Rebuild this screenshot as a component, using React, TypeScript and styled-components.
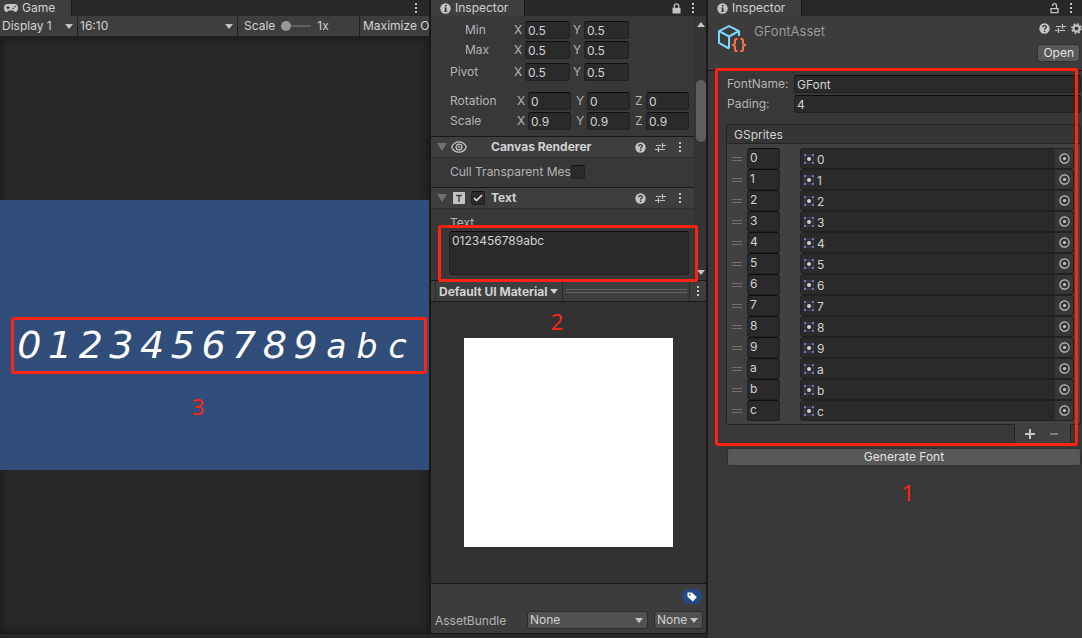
import React, { useId, useState } from "react";
import styled, { createGlobalStyle } from "styled-components";

const color = {
  line: "#191919",
  bar: "#282828",
  panel: "#383838",
  head: "#3e3e3e",
  field: "#2a2a2a",
  fieldEdge: "#212121",
  fieldTop: "#0d0d0d",
  label: "#b4b4b4",
  text: "#d2d2d2",
  icon: "#c4c4c4",
  mark: "#ff2314",
};

const GlobalStyle = createGlobalStyle`
  * { box-sizing: border-box; }
  body { margin: 0; background: ${color.bar}; }
  body, button, input, select, textarea {
    font-family: Inter, "Liberation Sans", sans-serif;
    font-size: 12px;
    line-height: 16px;
    color: ${color.text};
  }
  button { cursor: pointer; }
`;

/* ---------- layout ---------- */

const Editor = styled.div`
  display: grid;
  grid-template-columns: minmax(0, 708fr) minmax(0, 374fr);
  min-height: 100vh;
`;

const Workspace = styled.div`
  display: grid;
  grid-template-columns: minmax(0, 431fr) minmax(0, 277fr);
  border-bottom: 4px solid ${color.bar};
  background: ${color.line};
`;

const Panel = styled.section<{ $gap?: boolean }>`
  display: flex;
  flex-direction: column;
  min-width: 0;
  background: ${color.panel};
  border-right: ${(p) => (p.$gap ? 2 : 0)}px solid ${color.line};
  border-bottom: ${(p) => (p.$gap ? 1 : 0)}px solid ${color.line};
`;

const TabBar = styled.header`
  display: flex;
  justify-content: space-between;
  height: 16px;
  flex: none;
  background: ${color.bar};
`;

const Tab = styled.h2<{ $width: number }>`
  display: flex;
  align-items: center;
  gap: 4px;
  width: ${(p) => p.$width}px;
  height: 16px;
  margin: 0;
  padding-left: ${(p) => (p.$width < 80 ? 4 : 9)}px;
  background: ${color.head};
  border-right: 1px solid ${color.line};
  font-size: 12px;
  font-weight: 400;
`;

const IconRow = styled.div<{ $gap: number; $pad?: number }>`
  display: flex;
  align-items: center;
  gap: ${(p) => p.$gap}px;
  padding-right: ${(p) => p.$pad ?? 0}px;
`;

const IconButton = styled.button`
  display: grid;
  place-items: center;
  padding: 0;
  border: 0;
  background: none;
  color: ${color.icon};
`;

/* ---------- game view ---------- */

const Toolbar = styled.div`
  display: grid;
  grid-template-columns: 78px minmax(0, 160fr) 122px 69px;
  height: 21px;
  flex: none;
  overflow: hidden;
  background: ${color.head};
  border-bottom: 1px solid ${color.fieldEdge};
`;

const SelectBox = styled.div<{ $raised?: boolean }>`
  display: grid;
  align-items: center;
  min-width: 0;
  & > * { grid-area: 1 / 1; }
  & > svg { justify-self: end; margin-right: 4px; pointer-events: none; color: ${color.icon}; }
  ${(p) =>
    p.$raised
      ? "height: 18px; background: #515151; border: 1px solid #2c2c2c; border-radius: 3px;"
      : `border-right: 1px solid ${color.fieldEdge};`}
`;

const Select = styled.select`
  appearance: none;
  width: 100%;
  height: 16px;
  padding: 0 0 0 2px;
  border: 0;
  background: none;
`;

const ScaleGroup = styled.label`
  display: flex;
  align-items: center;
  gap: 6px;
  padding-left: 6px;
  border-right: 1px solid ${color.fieldEdge};
`;

const Slider = styled.input`
  appearance: none;
  width: 30px;
  height: 12px;
  margin: 0;
  background: linear-gradient(#5e5e5e, #5e5e5e) center / 100% 2px no-repeat;
  &::-webkit-slider-thumb {
    appearance: none;
    width: 10px;
    height: 10px;
    border-radius: 50%;
    background: #999;
  }
`;

const MaximizeButton = styled.button`
  padding: 0 0 0 3px;
  border: 0;
  background: none;
  text-align: left;
  white-space: nowrap;
  overflow: hidden;
`;

const Viewport = styled.div`
  display: flex;
  flex: 1;
  align-items: center;
  background: ${color.bar};
  box-shadow: inset 0 0 8px #151515;
`;

const Stage = styled.div`
  display: flex;
  flex-direction: column;
  align-items: center;
  width: 100%;
  aspect-ratio: 143 / 90;
  padding: 117px 2px 0 11px;
  background: #314d79;
`;

const Output = styled.div`
  display: grid;
  grid-template-columns: repeat(13, minmax(0, 1fr));
  align-items: baseline;
  width: 100%;
  height: 57px;
  padding-right: 11px;
  border: 3px solid ${color.mark};
  border-radius: 3px;
  color: #fff;
  text-align: center;
`;

const Glyph = styled.span<{ $letter: boolean }>`
  font: italic ${(p) => (p.$letter ? 33 : 38)}px/50px "DejaVu Sans", sans-serif;
`;

const Mark = styled.p`
  margin: 0;
  color: ${color.mark};
  font: 22px/28px "Noto Sans", sans-serif;
  text-align: center;
`;

const StageMark = styled(Mark)`
  margin: 18px 42px 0 0;
`;

/* ---------- inspector of the Text object ---------- */

const ScrollArea = styled.div`
  display: grid;
  grid-template-columns: minmax(0, 1fr) 12px;
  height: 264px;
  flex: none;
  position: relative;
`;

const Clip = styled.div`
  overflow: hidden;
  min-width: 0;
`;

const Transform = styled.div`
  margin-top: -16px;
  padding-bottom: 5px;
`;

const VectorRow = styled.div<{ $indent?: boolean; $before?: number }>`
  display: grid;
  grid-template-columns: 64px minmax(0, 1fr);
  align-items: center;
  height: 20px;
  margin-top: ${(p) => p.$before ?? 0}px;
  padding-left: 19px;
  color: ${color.label};
  & > span { padding-left: ${(p) => (p.$indent ? 15 : 0)}px; }
`;

const VectorFields = styled.div<{ $narrow: boolean }>`
  display: flex;
  gap: ${(p) => (p.$narrow ? 5 : 3)}px;
  margin-left: ${(p) => (p.$narrow ? 3 : 0)}px;
`;

const Axis = styled.label<{ $width: number }>`
  display: flex;
  align-items: center;
  gap: 3px;
  & > span { width: 8px; }
  & > input { width: ${(p) => p.$width}px; }
`;

const TextInput = styled.input`
  width: 100%;
  min-width: 0;
  height: 18px;
  padding: 0 2px;
  background: ${color.field};
  border: 1px solid ${color.fieldEdge};
  border-top-color: ${color.fieldTop};
  border-radius: 3px;
`;

const ComponentHead = styled.header`
  display: flex;
  align-items: center;
  height: 22px;
  padding: 0 4px 0 6px;
  background: ${color.head};
  border-top: 1px solid ${color.line};
  border-bottom: 1px solid #303030;
`;

const HeadSlot = styled.div<{ $width: number }>`
  display: flex;
  align-items: center;
  width: ${(p) => p.$width}px;
  flex: none;
`;

const HeadButton = styled(IconButton)`
  width: 20px;
`;

const ComponentName = styled.h3`
  flex: 1;
  margin: 0;
  font-size: 12px;
  font-weight: 700;
  white-space: nowrap;
`;

const CullRow = styled.label`
  display: flex;
  align-items: center;
  height: 29px;
  padding: 0 0 2px 19px;
  color: ${color.label};
  & > span:first-child { width: 121px; overflow: hidden; white-space: nowrap; }
`;

const Check = styled.span`
  display: grid;
  place-items: center;
  & > * { grid-area: 1 / 1; }
  & > svg { pointer-events: none; visibility: hidden; }
  & > input:checked + svg { visibility: visible; }
`;

const CheckInput = styled.input`
  appearance: none;
  width: 14px;
  height: 14px;
  margin: 0;
  background: ${color.field};
  border: 1px solid ${color.fieldEdge};
  border-top-color: ${color.fieldTop};
  border-radius: 3px;
`;

const TextBlock = styled.label`
  display: block;
  padding: 6px 5px 0 18px;
  color: ${color.label};
  & > span { display: block; padding-left: 1px; }
`;

const TextArea = styled.textarea`
  display: block;
  width: 100%;
  height: 44px;
  padding: 1px 2px;
  resize: none;
  background: ${color.field};
  border: 1px solid ${color.fieldEdge};
  border-top-color: ${color.fieldTop};
  border-radius: 3px;
`;

const Outline = styled.div`
  position: absolute;
  border: 3px solid ${color.mark};
  border-radius: 3px;
  pointer-events: none;
`;

const TextOutline = styled(Outline)`
  inset: 209px 8px -2px 7px;
`;

const ScrollTrack = styled.div`
  display: flex;
  flex-direction: column;
  align-items: center;
  padding: 6px 0 5px;
  background: #353535;
  border-left: 1px solid #303030;
  color: ${color.icon};
`;

const ScrollThumb = styled.div`
  width: 10px;
  height: 62px;
  margin: 53px 0 auto;
  border-radius: 5px;
  background: #5f5f5f;
`;

const PreviewBar = styled.div`
  display: flex;
  align-items: stretch;
  height: 22px;
  flex: none;
  padding-left: 4px;
  background: ${color.head};
  border: solid ${color.line};
  border-width: 1px 0;
`;

const PreviewTitle = styled.button`
  display: flex;
  align-items: center;
  gap: 3px;
  padding: 1px 4px 0 3px;
  border: solid #2a2a2a;
  border-width: 0 1px;
  background: none;
  font-weight: 700;
  white-space: nowrap;
`;

const Grip = styled.div`
  flex: 1;
  height: 4px;
  margin: auto 2px auto 3px;
  border: solid #666;
  border-width: 1px 0;
`;

const PreviewMenu = styled(IconButton)`
  width: 17px;
  border-left: 1px solid #2a2a2a;
`;

const Preview = styled.div`
  display: flex;
  flex: 1;
  flex-direction: column;
  align-items: center;
  padding: 5px 23px 35px 0;
  background: #313131;
`;

const Swatch = styled.div`
  width: 209px;
  max-width: 100%;
  aspect-ratio: 1;
  margin: 3px 0 0 23px;
  background: #fff;
`;

const AssetFooter = styled.footer`
  display: flex;
  flex-direction: column;
  align-items: flex-end;
  height: 50px;
  flex: none;
  padding: 5px 3px 0 4px;
  background: #3c3c3c;
  border-top: 1px solid ${color.line};
`;

const TagButton = styled(IconButton)`
  width: 20px;
  height: 15px;
  margin-right: 1px;
  border-radius: 8px;
  background: #234a84;
  color: #fff;
`;

const BundleRow = styled.div`
  display: grid;
  grid-template-columns: 92px minmax(0, 1fr) 55px;
  align-items: center;
  width: 100%;
  margin-top: 7px;
  & > label { padding-top: 2px; color: ${color.label}; }
  & > div:last-child { margin-left: 6px; }
`;

/* ---------- inspector of the font asset ---------- */

const AssetHead = styled.header`
  display: grid;
  grid-template-columns: 37px minmax(0, 1fr) auto;
  height: 55px;
  flex: none;
  padding: 6px 0 0 9px;
  background: #3c3c3c;
  border-bottom: 1px solid ${color.line};
`;

const AssetName = styled.h3`
  margin: 0;
  color: #999;
  font-size: 13px;
  font-weight: 400;
  line-height: 18px;
`;

const AssetActions = styled.div`
  display: flex;
  flex-direction: column;
  align-items: flex-end;
  gap: 10px;
  padding-top: 1px;
`;

const PushButton = styled.button`
  height: 18px;
  padding: 0 5px;
  line-height: 16px;
  background: #585858;
  border: 1px solid #303030;
  border-radius: 3px;
  color: #e4e4e4;
`;

const OpenButton = styled(PushButton)`
  margin-right: 2px;
`;

const GenerateButton = styled(PushButton)`
  display: block;
  width: 100%;
  margin-top: 5px;
`;

const AssetBody = styled.div`
  position: relative;
  padding: 3px 1px 0 19px;
`;

const AssetField = styled.label`
  display: grid;
  grid-template-columns: 67px minmax(0, 1fr);
  align-items: center;
  height: 20px;
  color: ${color.label};
  white-space: nowrap;
`;

const AssetOutline = styled(Outline)`
  inset: -3px 4px auto 7px;
  height: 378px;
`;

const ListTitle = styled.h4`
  height: 20px;
  margin: 10px 0 0 -1px;
  padding: 2px 7px 0;
  background: #353535;
  border: 1px solid #242424;
  border-radius: 3px 3px 0 0;
  font-size: 12px;
  font-weight: 400;
`;

const List = styled.ul`
  margin: 0 0 0 -1px;
  padding: 4px 6px 3px 5px;
  list-style: none;
  background: #414141;
  border: 1px solid #242424;
  border-top: 0;
  border-radius: 0 0 3px 3px;
`;

const ListRow = styled.li`
  display: grid;
  grid-template-columns: 10px 33px minmax(0, 1fr);
  align-items: center;
  height: 21px;
`;

const Handle = styled.span`
  height: 4px;
  border: solid #707070;
  border-width: 1px 0;
`;

const KeyInput = styled(TextInput)`
  width: 33px;
  height: 21px;
  margin-left: 5px;
  padding-bottom: 2px;
`;

const ObjectField = styled.div`
  display: grid;
  grid-template-columns: 10px minmax(0, 1fr) 18px;
  column-gap: 3px;
  align-items: center;
  height: 21px;
  margin-left: 25px;
  padding-left: 3px;
  background: ${color.field};
  border: 1px solid ${color.fieldEdge};
  border-radius: 3px;
  & > span { padding-top: 2px; }
`;

const PickButton = styled(IconButton)`
  height: 19px;
  background: #373737;
  border-radius: 0 3px 3px 0;
`;

const ListActions = styled.div`
  display: flex;
  align-items: center;
  justify-content: space-around;
  width: 57px;
  height: 19px;
  margin: -1px 10px 0 auto;
  padding: 0 5px 0 3px;
  position: relative;
  background: #414141;
  border: solid #242424;
  border-width: 0 1px;
`;

const AssetMark = styled(Mark)`
  margin: 12px 0 0 8px;
`;

/* ---------- icons ---------- */

const Dots = () => (
  <svg width="4" height="12" viewBox="0 0 4 12" fill="currentColor">
    <path d="M1 1h2v2H1zM1 5h2v2H1zM1 9h2v2H1z" />
  </svg>
);

const Caret = ({ up = false }: { up?: boolean }) => (
  <svg width="8" height="5" viewBox="0 0 8 5" fill="currentColor">
    <path d={up ? "M0 5L4 0l4 5z" : "M0 0h8L4 5z"} />
  </svg>
);

const Fold = () => (
  <svg width="10" height="8" viewBox="0 0 10 8" fill="#717171">
    <path d="M0 0h10L5 8z" />
  </svg>
);

const Gamepad = () => (
  <svg width="14" height="8" viewBox="0 0 14 8">
    <path d="M3.500 0h7A3.500 3.500 0 0 1 14 3.700C14 6 13 8 11.500 8 10.200 8 9.800 6.500 8.800 6.500H5.200C4.200 6.500 3.800 8 2.500 8 1 8 0 6 0 3.700A3.500 3.500 0 0 1 3.500 0z" fill={color.icon} />
    <path d="M4 2v3.200M2.400 3.600h3.200M8.400 4.400h1.400M10.600 2.600H12" stroke="#333" strokeWidth="1.200" />
  </svg>
);

const Info = () => (
  <svg width="11" height="11" viewBox="0 0 11 11">
    <circle cx="5.500" cy="5.500" r="5.200" fill={color.icon} />
    <path d="M5 2h1.600v1.500H5zM4.200 4.500h2.300v3.200h.8v1H4v-1h.9V5.500h-.7z" fill="#333" />
  </svg>
);

const Lock = ({ open = false }: { open?: boolean }) => (
  <svg width="9" height="11" viewBox="0 0 9 11" fill="none" stroke={color.icon} strokeWidth="1.300">
    {open ? (
      <>
        <path d="M2.500 3V2.700a2 2 0 0 1 4 0V5.500" />
        <path d="M1 5.700h7v4H1z" />
      </>
    ) : (
      <>
        <path d="M2.300 5V3a2.200 2.200 0 0 1 4.400 0v2" />
        <path d="M.5 4.800h8v5.700h-8z" fill={color.icon} stroke="none" />
      </>
    )}
  </svg>
);

const Help = () => (
  <svg width="11" height="11" viewBox="0 0 11 11">
    <circle cx="5.500" cy="5.500" r="5.200" fill={color.icon} />
    <path d="M3.700 4.300c0-2.400 3.600-2.200 3.600-.2 0 1.300-1.700 1.200-1.700 2.600" fill="none" stroke="#333" strokeWidth="1.300" />
    <path d="M4.900 7.600h1.400V9H4.900z" fill="#333" />
  </svg>
);

const Presets = () => (
  <svg width="11" height="11" viewBox="0 0 11 11" stroke={color.icon} strokeWidth="1.200" fill="none">
    <path d="M1 3.500h5.500M8 3.500h3M7.500 1v5M0 7.500h3M4.500 7.500h5.500M3.500 5v5" />
  </svg>
);

const Gear = () => (
  <svg width="11" height="11" viewBox="0 0 11 11" fill="none" stroke={color.icon}>
    <circle cx="5.500" cy="5.500" r="3" strokeWidth="2" />
    <circle cx="5.500" cy="5.500" r="4.600" strokeWidth="1.600" strokeDasharray="1.810 1.810" />
  </svg>
);

const Eye = () => (
  <svg width="16" height="12" viewBox="0 0 16 12" fill="none" stroke={color.icon} strokeWidth="1.300">
    <path d="M.7 6C3.500-.9 12.500-.9 15.300 6 12.500 12.900 3.500 12.900.7 6z" />
    <circle cx="8" cy="6" r="2.900" />
    <circle cx="8" cy="6" r="1" fill={color.icon} stroke="none" />
  </svg>
);

const TextIcon = () => (
  <svg width="12" height="12" viewBox="0 0 12 12">
    <rect width="12" height="12" rx="1" fill={color.icon} />
    <path d="M3 3.500h6M6 3.500V10" stroke="#444" strokeWidth="1.500" />
  </svg>
);

const Tick = () => (
  <svg width="10" height="8" viewBox="0 0 10 8" fill="none" stroke="#e6e6e6" strokeWidth="1.500">
    <path d="M1 4l2.500 2.500L9 1" />
  </svg>
);

const Tag = () => (
  <svg width="10" height="10" viewBox="0 0 10 10">
    <path d="M.5.5H5L9.800 5.300 5.800 9.600.5 4.800z" fill="currentColor" />
    <circle cx="2.700" cy="2.700" r=".9" fill="#234a84" />
  </svg>
);

const AssetIcon = () => (
  <svg width="30" height="31" viewBox="0 0 30 31" fill="none" strokeWidth="2">
    <path d="M12 26.500L2 21V9L12 4l10 5V14M2 9l10 5.500L22 9M12 14.500v12" stroke="#7fd6fd" />
    <path d="M20.500 17h-1q-1.500 0-1.500 1.500v3l-2 1.500 2 1.500v3q0 1.500 1.500 1.500h1M23.500 17h1q1.500 0 1.500 1.500v3l2 1.500-2 1.500v3q0 1.500-1.500 1.500h-1" stroke="#ff6e40" />
  </svg>
);

const Sprite = () => (
  <svg width="10" height="10" viewBox="0 0 10 10">
    <path d="M1 1h8v8H1z" fill="none" stroke="#4a4463" />
    <path d="M0 0h2v2H0zM8 0h2v2H8zM0 8h2v2H0zM8 8h2v2H8z" fill="#7c6bb5" />
    <circle cx="5" cy="5" r="2" fill="#d2d2d2" />
  </svg>
);

const Target = () => (
  <svg width="11" height="11" viewBox="0 0 11 11">
    <circle cx="5.500" cy="5.500" r="4.600" fill="none" stroke={color.icon} strokeWidth="1.200" />
    <circle cx="5.500" cy="5.500" r="1.600" fill={color.icon} />
  </svg>
);

const Plus = () => (
  <svg width="10" height="10" viewBox="0 0 10 10" stroke={color.icon} strokeWidth="2">
    <path d="M5 0v10M0 5h10" />
  </svg>
);

const Minus = () => (
  <svg width="8" height="10" viewBox="0 0 8 10" stroke="#7d7d7d" strokeWidth="2">
    <path d="M0 5h8" />
  </svg>
);

/* ---------- parts ---------- */

function Dropdown({ name, value, raised }: { name: string; value: string; raised?: boolean }) {
  return (
    <SelectBox $raised={raised}>
      <Select aria-label={name} defaultValue={value}>
        <option>{value}</option>
      </Select>
      <Caret />
    </SelectBox>
  );
}

interface VectorProps {
  name: string;
  values: string[];
  indent?: boolean;
  before?: number;
}

function Vector({ name, values, indent, before }: VectorProps) {
  const narrow = values.length === 3;
  return (
    <VectorRow $indent={indent} $before={before}>
      <span>{name}</span>
      <VectorFields $narrow={narrow}>
        {values.map((v, i) => (
          <Axis key={i} $width={narrow ? 43 : 45}>
            <span>{"XYZ"[i]}</span>
            <TextInput defaultValue={v} />
          </Axis>
        ))}
      </VectorFields>
    </VectorRow>
  );
}

function HeadIcons() {
  return (
    <IconRow $gap={0}>
      <HeadButton aria-label="Help"><Help /></HeadButton>
      <HeadButton aria-label="Presets"><Presets /></HeadButton>
      <HeadButton aria-label="More"><Dots /></HeadButton>
    </IconRow>
  );
}

const keys = ["0", "1", "2", "3", "4", "5", "6", "7", "8", "9", "a", "b", "c"];

export default function App() {
  const [text, setText] = useState("0123456789abc");
  const bundleId = useId();

  return (
    <>
      <GlobalStyle />
      <Editor>
        <Workspace>
          <Panel $gap>
            <TabBar>
              <Tab $width={72}><Gamepad />Game</Tab>
              <IconRow $gap={0} $pad={11}>
                <IconButton aria-label="Game menu"><Dots /></IconButton>
              </IconRow>
            </TabBar>
            <Toolbar>
              <Dropdown name="Display" value="Display 1" />
              <Dropdown name="Aspect" value="16:10" />
              <ScaleGroup>
                Scale
                <Slider type="range" min={1} max={5} defaultValue={1} />
                <span>1x</span>
              </ScaleGroup>
              <MaximizeButton>Maximize On Play</MaximizeButton>
            </Toolbar>
            <Viewport>
              <Stage>
                <Output>
                  {[...text].map((ch, i) => (
                    <Glyph key={i} $letter={/[a-z]/.test(ch)}>{ch}</Glyph>
                  ))}
                </Output>
                <StageMark>3</StageMark>
              </Stage>
            </Viewport>
          </Panel>

          <Panel $gap>
            <TabBar>
              <Tab $width={94}><Info />Inspector</Tab>
              <IconRow $gap={10} $pad={11}>
                <IconButton aria-label="Lock"><Lock /></IconButton>
                <IconButton aria-label="Inspector menu"><Dots /></IconButton>
              </IconRow>
            </TabBar>
            <ScrollArea>
              <Clip>
                <Transform>
                  <VectorRow><span>Anchors</span></VectorRow>
                  <Vector name="Min" values={["0.5", "0.5"]} indent />
                  <Vector name="Max" values={["0.5", "0.5"]} indent />
                  <Vector name="Pivot" values={["0.5", "0.5"]} before={2} />
                  <Vector name="Rotation" values={["0", "0", "0"]} before={9} />
                  <Vector name="Scale" values={["0.9", "0.9", "0.9"]} />
                </Transform>
                <ComponentHead>
                  <HeadSlot $width={14}><Fold /></HeadSlot>
                  <HeadSlot $width={40}><Eye /></HeadSlot>
                  <ComponentName>Canvas Renderer</ComponentName>
                  <HeadIcons />
                </ComponentHead>
                <CullRow>
                  <span>Cull Transparent Mesh</span>
                  <Check><CheckInput type="checkbox" /><Tick /></Check>
                </CullRow>
                <ComponentHead>
                  <HeadSlot $width={16}><Fold /></HeadSlot>
                  <HeadSlot $width={18}><TextIcon /></HeadSlot>
                  <HeadSlot $width={20}>
                    <Check>
                      <CheckInput type="checkbox" aria-label="Text enabled" defaultChecked />
                      <Tick />
                    </Check>
                  </HeadSlot>
                  <ComponentName>Text</ComponentName>
                  <HeadIcons />
                </ComponentHead>
                <TextBlock>
                  <span>Text</span>
                  <TextArea value={text} onChange={(e) => setText(e.target.value)} spellCheck={false} />
                </TextBlock>
              </Clip>
              <ScrollTrack>
                <Caret up />
                <ScrollThumb />
                <Caret />
              </ScrollTrack>
              <TextOutline />
            </ScrollArea>
            <PreviewBar>
              <PreviewTitle>Default UI Material<Caret /></PreviewTitle>
              <Grip />
              <PreviewMenu aria-label="Preview menu"><Dots /></PreviewMenu>
            </PreviewBar>
            <Preview>
              <Mark>2</Mark>
              <Swatch />
            </Preview>
            <AssetFooter>
              <TagButton aria-label="Asset labels"><Tag /></TagButton>
              <BundleRow>
                <label htmlFor={bundleId}>AssetBundle</label>
                <SelectBox $raised>
                  <Select id={bundleId} defaultValue="None"><option>None</option></Select>
                  <Caret />
                </SelectBox>
                <Dropdown name="Variant" value="None" raised />
              </BundleRow>
            </AssetFooter>
          </Panel>
        </Workspace>

        <Panel>
          <TabBar>
            <Tab $width={94}><Info />Inspector</Tab>
            <IconRow $gap={10} $pad={9}>
              <IconButton aria-label="Lock"><Lock open /></IconButton>
              <IconButton aria-label="Inspector menu"><Dots /></IconButton>
            </IconRow>
          </TabBar>
          <AssetHead>
            <AssetIcon />
            <AssetName>GFontAsset</AssetName>
            <AssetActions>
              <IconRow $gap={5}>
                <IconButton aria-label="Help"><Help /></IconButton>
                <IconButton aria-label="Presets"><Presets /></IconButton>
                <IconButton aria-label="Settings"><Gear /></IconButton>
              </IconRow>
              <OpenButton>Open</OpenButton>
            </AssetActions>
          </AssetHead>
          <AssetBody>
            <AssetField>FontName:<TextInput defaultValue="GFont" /></AssetField>
            <AssetField>Pading:<TextInput defaultValue="4" /></AssetField>
            <ListTitle>GSprites</ListTitle>
            <List>
              {keys.map((k) => (
                <ListRow key={k}>
                  <Handle />
                  <KeyInput aria-label={`Key ${k}`} defaultValue={k} />
                  <ObjectField>
                    <Sprite />
                    <span>{k}</span>
                    <PickButton aria-label={`Pick sprite ${k}`}><Target /></PickButton>
                  </ObjectField>
                </ListRow>
              ))}
            </List>
            <ListActions>
              <IconButton aria-label="Add"><Plus /></IconButton>
              <IconButton aria-label="Remove"><Minus /></IconButton>
            </ListActions>
            <GenerateButton>Generate Font</GenerateButton>
            <AssetMark>1</AssetMark>
            <AssetOutline />
          </AssetBody>
        </Panel>
      </Editor>
    </>
  );
}
